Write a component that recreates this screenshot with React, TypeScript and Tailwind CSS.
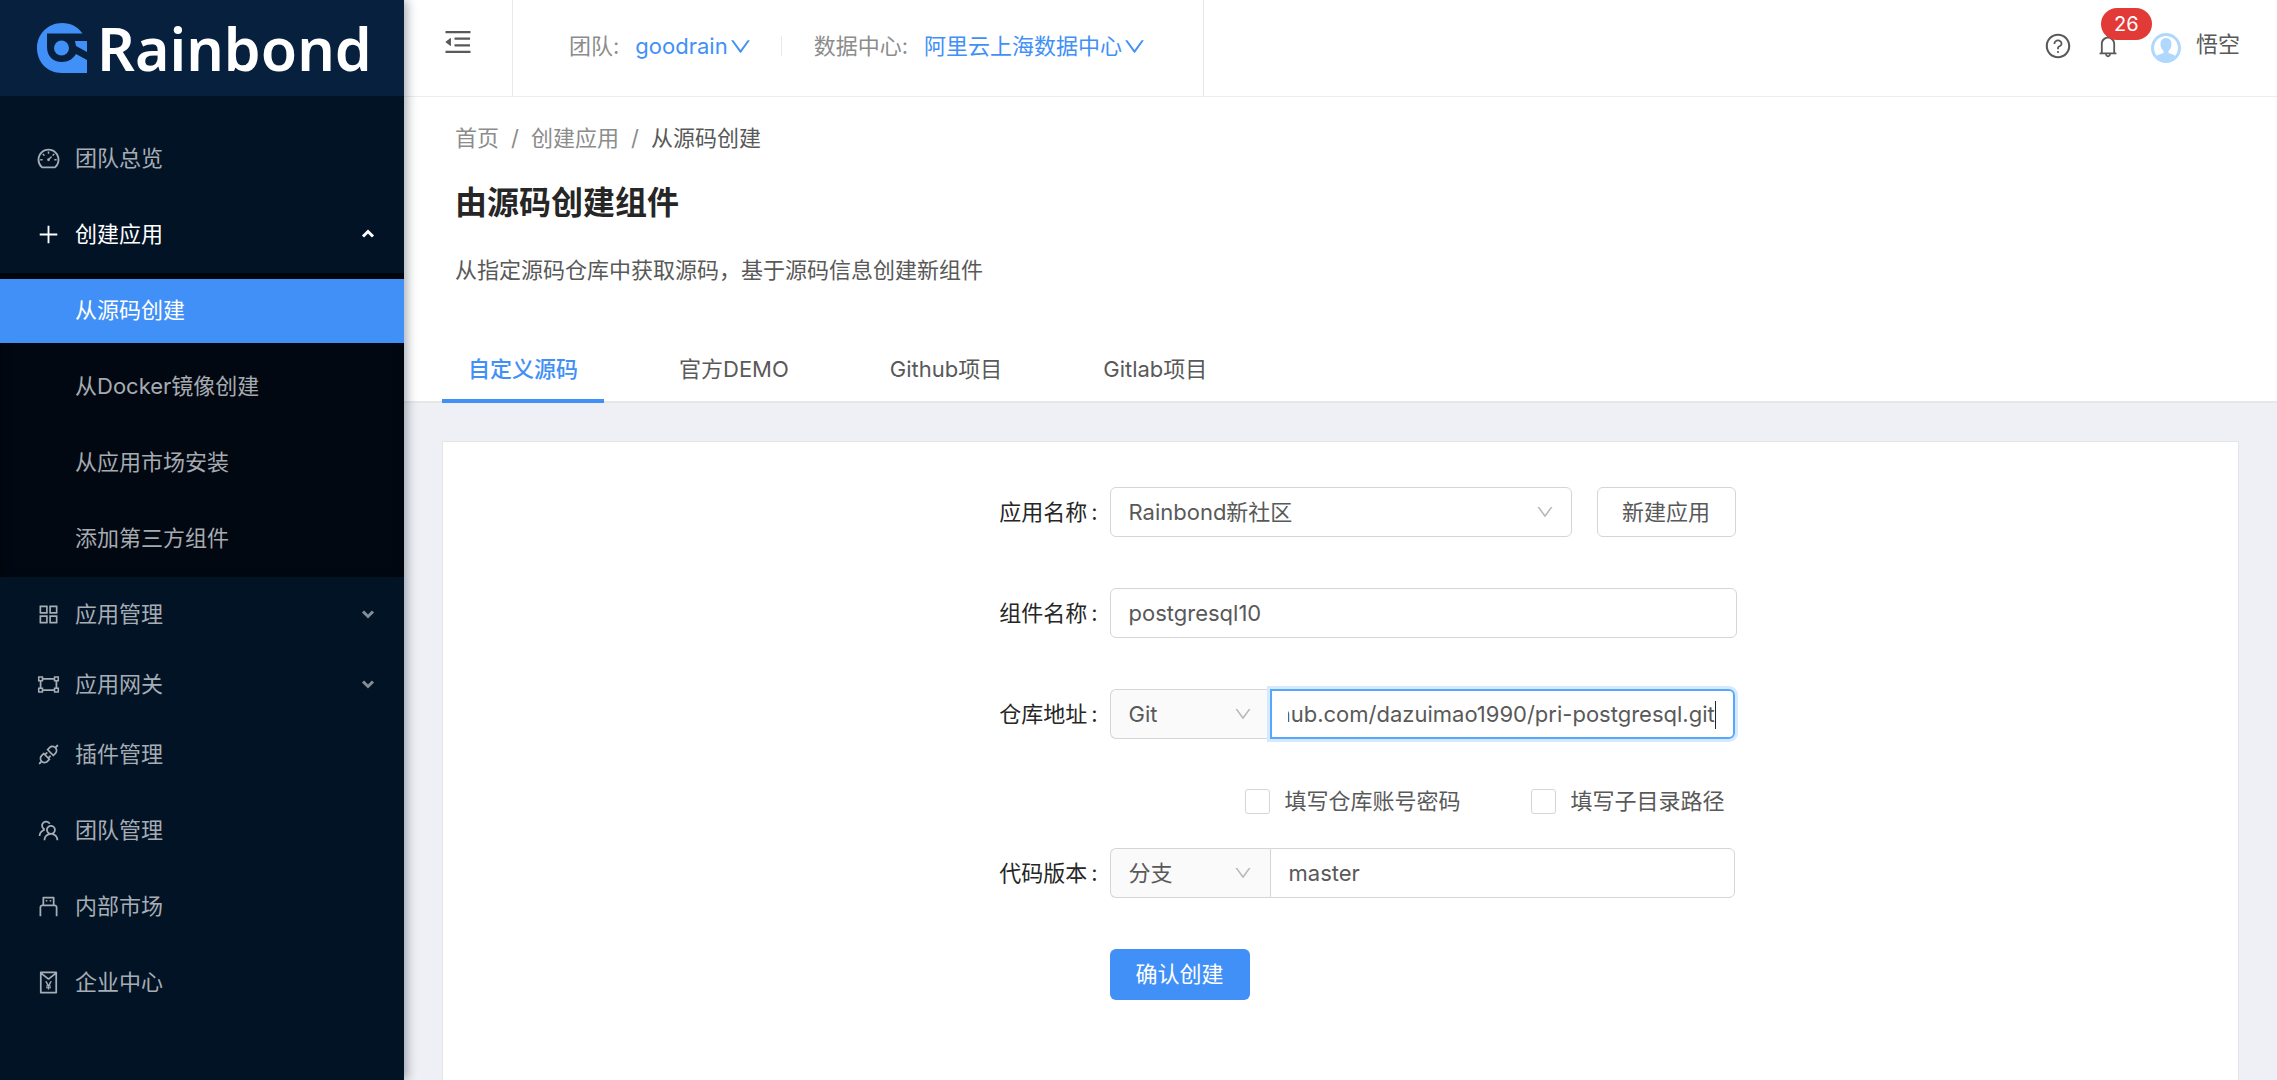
import { useEffect, useRef } from "react";
import type { ReactNode, SelectHTMLAttributes } from "react";
import type { IconType } from "react-icons";
import {
  AiOutlineApi,
  AiOutlineAppstore,
  AiOutlineBell,
  AiOutlineDashboard,
  AiOutlineDown,
  AiOutlineGateway,
  AiOutlineMenuFold,
  AiOutlinePlus,
  AiOutlineQuestionCircle,
  AiOutlineRedEnvelope,
  AiOutlineTeam,
  AiOutlineUsb,
} from "react-icons/ai";
import clsx from "clsx";

type MenuEntry = {
  label: string;
  icon: IconType;
  open?: boolean;
  group?: boolean;
  children?: string[];
};

const menu: MenuEntry[] = [
  { label: "团队总览", icon: AiOutlineDashboard },
  {
    label: "创建应用",
    icon: AiOutlinePlus,
    group: true,
    open: true,
    children: ["从源码创建", "从Docker镜像创建", "从应用市场安装", "添加第三方组件"],
  },
  { label: "应用管理", icon: AiOutlineAppstore, group: true },
  { label: "应用网关", icon: AiOutlineGateway, group: true },
  { label: "插件管理", icon: AiOutlineApi },
  { label: "团队管理", icon: AiOutlineTeam },
  { label: "内部市场", icon: AiOutlineUsb },
  { label: "企业中心", icon: AiOutlineRedEnvelope },
];

const tabs = ["自定义源码", "官方DEMO", "Github项目", "Gitlab项目"];

function Logo() {
  return (
    <a href="#" className="flex h-24 items-center bg-[#07203e] pl-[37px] text-white">
      <svg viewBox="0 0 50 50" className="size-[50px] shrink-0">
        {/* open ring with a squared corner, and the eye inside it */}
        <path
          fill="#4190f7"
          d="M45.500 10.500C41 4 34 0 25 0 11 0 0 11 0 25s10 25 25 25h25V37l-11-6c-3 5-8 8-14 8-9 0-15-6-15-15V10.500Z"
        />
        <path fill="#4190f7" d="M38 18h12v11l-11-6Z" />
        <circle cx="24.500" cy="25" r="7.500" fill="#4190f7" />
      </svg>
      <span className="ml-2.5 font-['Noto_Sans'] text-[59px] leading-[72px] font-semibold">Rainbond</span>
    </a>
  );
}

function GroupArrow({ open }: { open?: boolean }) {
  return (
    <svg viewBox="0 0 14 10" className={clsx("ml-auto w-3.5", open ? "rotate-180" : "opacity-80")}>
      <path d="M2 2.500 7 7.500 12 2.500" fill="none" stroke="currentColor" strokeWidth="3" />
    </svg>
  );
}

function Sidebar() {
  return (
    <aside className="relative z-10 w-[404px] shrink-0 bg-[#021325] shadow-[3px_0_10px_rgba(0,21,41,0.35)]">
      <Logo />
      <nav className="flex flex-col pt-[25px]">
        {menu.map(({ label, icon: Icon, group, open, children }) => (
          <div key={label} className={group ? "mt-1.5" : "my-1.5"}>
            <button
              type="button"
              aria-expanded={group ? !!open : undefined}
              className={clsx(
                "flex h-16 w-full items-center gap-3.5 pr-[29px] pb-0.5 pl-9",
                open ? "text-white" : "text-[#a6adb4]",
              )}
            >
              <Icon className="size-[25px]" />
              {label}
              {group && <GroupArrow open={open} />}
            </button>
            {children && (
              <ul className="mt-1.5 bg-[#020812] py-1.5 shadow-[inset_0_3px_12px_rgba(0,0,0,0.45)]">
                {children.map((child, i) => (
                  <li key={child} className="mb-3 last:mb-0">
                    <a
                      href="#"
                      className={clsx(
                        "flex h-16 items-center pb-0.5 pl-[75px]",
                        i === 0 ? "bg-[#4190f7] text-white" : "text-[#a6abb0]",
                      )}
                    >
                      {child}
                    </a>
                  </li>
                ))}
              </ul>
            )}
          </div>
        ))}
      </nav>
    </aside>
  );
}

function TopBar() {
  return (
    <header className="flex h-[97px] border-b border-[#ebeef0] bg-white">
      <button type="button" aria-label="收起菜单" className="flex w-[108px] items-center pb-3 pl-[38px]">
        <AiOutlineMenuFold className="size-8" />
      </button>
      <div className="flex items-center border-x border-[#e8e8e8] px-14 pb-1 text-[#8c8c8c]">
        团队:
        <button type="button" className="ml-4 flex items-center text-[#4190f7]">
          goodrain
          <AiOutlineDown className="size-[25px]" />
        </button>
        <span className="mr-8 ml-7 h-5 w-px bg-[#e8e8e8]" />
        数据中心:
        <button type="button" className="ml-4 flex items-center text-[#4190f7]">
          阿里云上海数据中心
          <AiOutlineDown className="size-[25px]" />
        </button>
      </div>
      <div className="ml-auto flex items-center pr-[37px] pb-1">
        <button type="button" aria-label="帮助">
          <AiOutlineQuestionCircle className="size-7" />
        </button>
        <button type="button" aria-label="消息" className="relative ml-[23px]">
          <AiOutlineBell className="size-[26px]" />
          <span className="absolute -top-[25px] left-1.5 h-8 rounded-full bg-[#e13a37] px-[13px] text-[20px] leading-8 text-white">
            26
          </span>
        </button>
        <button type="button" className="ml-[30px] flex items-center gap-[15px] pb-1">
          <svg viewBox="0 0 30 30" className="mt-2 size-[30px]">
            <circle cx="15" cy="15" r="13.500" fill="#fff" stroke="#b0d8ff" strokeWidth="3" />
            <path
              fill="#b0d8ff"
              d="M15 5c-4 0-5.500 3-5.500 6 0 3 1 5 3 7v2c-3 1-6 1.500-8 4 3 4 6.500 6 10.500 6s7.500-2 10.500-6c-2-2.500-5-3-8-4v-2c2-2 3-4 3-7 0-3-1.500-6-5.500-6Z"
            />
          </svg>
          悟空
        </button>
      </div>
    </header>
  );
}

function PageHeader() {
  return (
    <div className="border-b-2 border-[#e6e7e9] bg-white px-[38px]">
      <div className="pl-[13px]">
        <nav className="flex gap-3 pt-[25px] leading-8 text-[#8c8c8c]">
          <a href="#">首页</a>
          <span>/</span>
          <a href="#">创建应用</a>
          <span>/</span>
          <span className="text-[#595959]">从源码创建</span>
        </nav>
        <h1 className="mt-6 text-[32px] leading-[50px] font-bold text-[#262626]">由源码创建组件</h1>
        <p className="mt-6 leading-9">从指定源码仓库中获取源码，基于源码信息创建新组件</p>
      </div>
      <div role="tablist" className="-mb-0.5 mt-[51px] flex gap-[49px]">
        {tabs.map((tab, i) => (
          <button
            key={tab}
            type="button"
            role="tab"
            aria-selected={i === 0}
            className={clsx(
              "h-16 border-b-4 px-[26px]",
              i === 0 ? "border-[#4190f7] font-medium text-[#4190f7]" : "border-transparent",
            )}
          >
            {tab}
          </button>
        ))}
      </div>
    </div>
  );
}

function Select({ className, children, ...rest }: SelectHTMLAttributes<HTMLSelectElement>) {
  return (
    <div className="relative flex shrink-0">
      <select
        className={clsx("h-[50px] appearance-none border border-[#d5d5d5] pl-[18px] outline-none", className)}
        {...rest}
      >
        {children}
      </select>
      <AiOutlineDown className="pointer-events-none absolute top-[15px] right-[17px] size-5 text-[#b8b8b8]" />
    </div>
  );
}

function Field({ id, label, children }: { id: string; label: string; children: ReactNode }) {
  return (
    <div className="flex items-center">
      <label htmlFor={id} className="w-[165px] shrink-0 pr-3 text-right text-[#262626]">
        {label}
        <span className="ml-1">:</span>
      </label>
      {children}
    </div>
  );
}

function SourceForm() {
  const repoRef = useRef<HTMLInputElement>(null);

  // keep the end of a long url in view
  useEffect(() => {
    const input = repoRef.current;
    if (!input) return;
    input.focus();
    input.setSelectionRange(input.value.length, input.value.length);
    input.scrollLeft = input.scrollWidth;
  }, []);

  return (
    <form className="mx-auto flex w-[792px] flex-col" onSubmit={(e) => e.preventDefault()}>
      <Field id="app" label="应用名称">
        <Select id="app" className="w-[462px] rounded-md bg-white">
          <option>Rainbond新社区</option>
        </Select>
        <button type="button" className="ml-[25px] h-[50px] w-[139px] rounded-md border border-[#d5d5d5]">
          新建应用
        </button>
      </Field>
      <div className="mt-[51px]">
        <Field id="component" label="组件名称">
          <input
            id="component"
            defaultValue="postgresql10"
            className="h-[50px] min-w-0 flex-1 rounded-md border border-[#d5d5d5] px-[18px] outline-none"
          />
        </Field>
      </div>
      <div className="mt-[51px]">
        <Field id="repo" label="仓库地址">
          <Select aria-label="仓库类型" className="w-40 rounded-l-md border-r-0 bg-[#fafafa]">
            <option>Git</option>
          </Select>
          <div className="relative mr-0.5 flex min-w-0 flex-1">
            <input
              id="repo"
              ref={repoRef}
              defaultValue="https://github.com/dazuimao1990/pri-postgresql.git"
              className="h-[50px] w-full rounded-r-md border-2 border-[#57a8fc] pr-[18px] pl-4 caret-transparent shadow-[0_0_0_3px_#d7e9fd] outline-none"
            />
            <span className="pointer-events-none absolute top-3 right-[19px] h-7 w-px bg-[#262626]" />
          </div>
        </Field>
      </div>
      <div className="mt-[49px] flex h-[26px] items-center justify-end gap-[71px] pr-3">
        {["填写仓库账号密码", "填写子目录路径"].map((text) => (
          <label key={text} className="flex items-center gap-3.5">
            <input type="checkbox" className="size-[25px] appearance-none rounded-[3px] border border-[#d5d5d5] bg-white" />
            {text}
          </label>
        ))}
      </div>
      <div className="mt-[34px]">
        <Field id="version" label="代码版本">
          <Select aria-label="版本类型" className="w-40 rounded-l-md border-r-0 bg-[#fafafa]">
            <option>分支</option>
          </Select>
          <input
            id="version"
            defaultValue="master"
            className="mr-0.5 h-[50px] min-w-0 flex-1 rounded-r-md border border-[#d5d5d5] px-[18px] outline-none"
          />
        </Field>
      </div>
      <button type="submit" className="mt-[51px] ml-[165px] h-[51px] w-[140px] rounded-md bg-[#4190f7] text-white">
        确认创建
      </button>
    </form>
  );
}

export default function App() {
  return (
    <div className="flex min-h-screen bg-[#eff0f5] font-['Inter','Noto_Sans_CJK_SC',sans-serif] text-[22px] text-[#595959]">
      <Sidebar />
      <div className="flex min-w-0 flex-1 flex-col">
        <TopBar />
        <PageHeader />
        <main className="mx-[38px] mt-[38px] flex-1 border border-b-0 border-[#e4e5e8] bg-white pt-[45px]">
          <SourceForm />
        </main>
      </div>
    </div>
  );
}
